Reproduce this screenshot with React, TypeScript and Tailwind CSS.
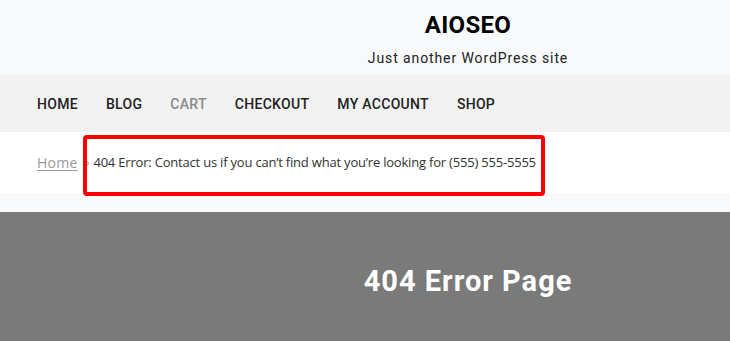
import React from 'react';

const navItems = [
  { label: 'HOME', muted: false },
  { label: 'BLOG', muted: false },
  { label: 'CART', muted: true },
  { label: 'CHECKOUT', muted: false },
  { label: 'MY ACCOUNT', muted: false },
  { label: 'SHOP', muted: false },
];

const App: React.FC = () => {
  return (
    <div className="min-h-[341px] w-full flex flex-col font-['Roboto',sans-serif] overflow-hidden">
      {/* site header */}
      <header className="h-[75px] bg-[#f8f9fa] flex flex-col items-center pl-[206px]">
        <h1 className="mt-[10px] text-[24px] leading-[30px] font-bold text-black tracking-[0.3px]">AIOSEO</h1>
        <p className="mt-[10px] text-[14px] leading-[16px] text-[#222] tracking-[0.9px]">Just another WordPress site</p>
      </header>

      {/* nav */}
      <nav className="h-[57px] bg-[#f2f2f2] flex items-center pl-[37px] gap-[28px]">
        {navItems.map((item) => (
          <a
            key={item.label}
            className={`text-[14px] leading-[20px] mt-[1px] font-medium tracking-[0.3px] ${item.muted ? 'text-[#888]' : 'text-[#222]'}`}
          >
            {item.label}
          </a>
        ))}
      </nav>

      {/* breadcrumb */}
      <div className="relative h-[61px] bg-white flex items-center pl-[37px]">
        <a className="text-[14px] text-[#999] underline underline-offset-2 tracking-[0.3px] font-['Open_Sans',sans-serif]">Home</a>
        <span className="ml-[6px] text-[12px] text-[#999]">»</span>
        <span className="ml-[4px] text-[13px] text-[#333] font-['Open_Sans',sans-serif] tracking-[-0.2px]">
          404 Error: Contact us if you can’t find what you’re looking for (555) 555-5555
        </span>
        <div className="absolute left-[83px] top-[3px] w-[462px] h-[61px] border-[4px] border-[#ff0000] rounded-[4px]" />
      </div>
      <div className="h-[19px] bg-[#f8f9fa]" />

      {/* hero */}
      <section className="flex-1 min-h-[128px] bg-[#7a7a7a] flex justify-center pl-[206px]">
        <h2 className="mt-[49px] text-[29px] leading-[40px] font-bold text-white tracking-[1px]">404 Error Page</h2>
      </section>
    </div>
  );
};

export default App;
